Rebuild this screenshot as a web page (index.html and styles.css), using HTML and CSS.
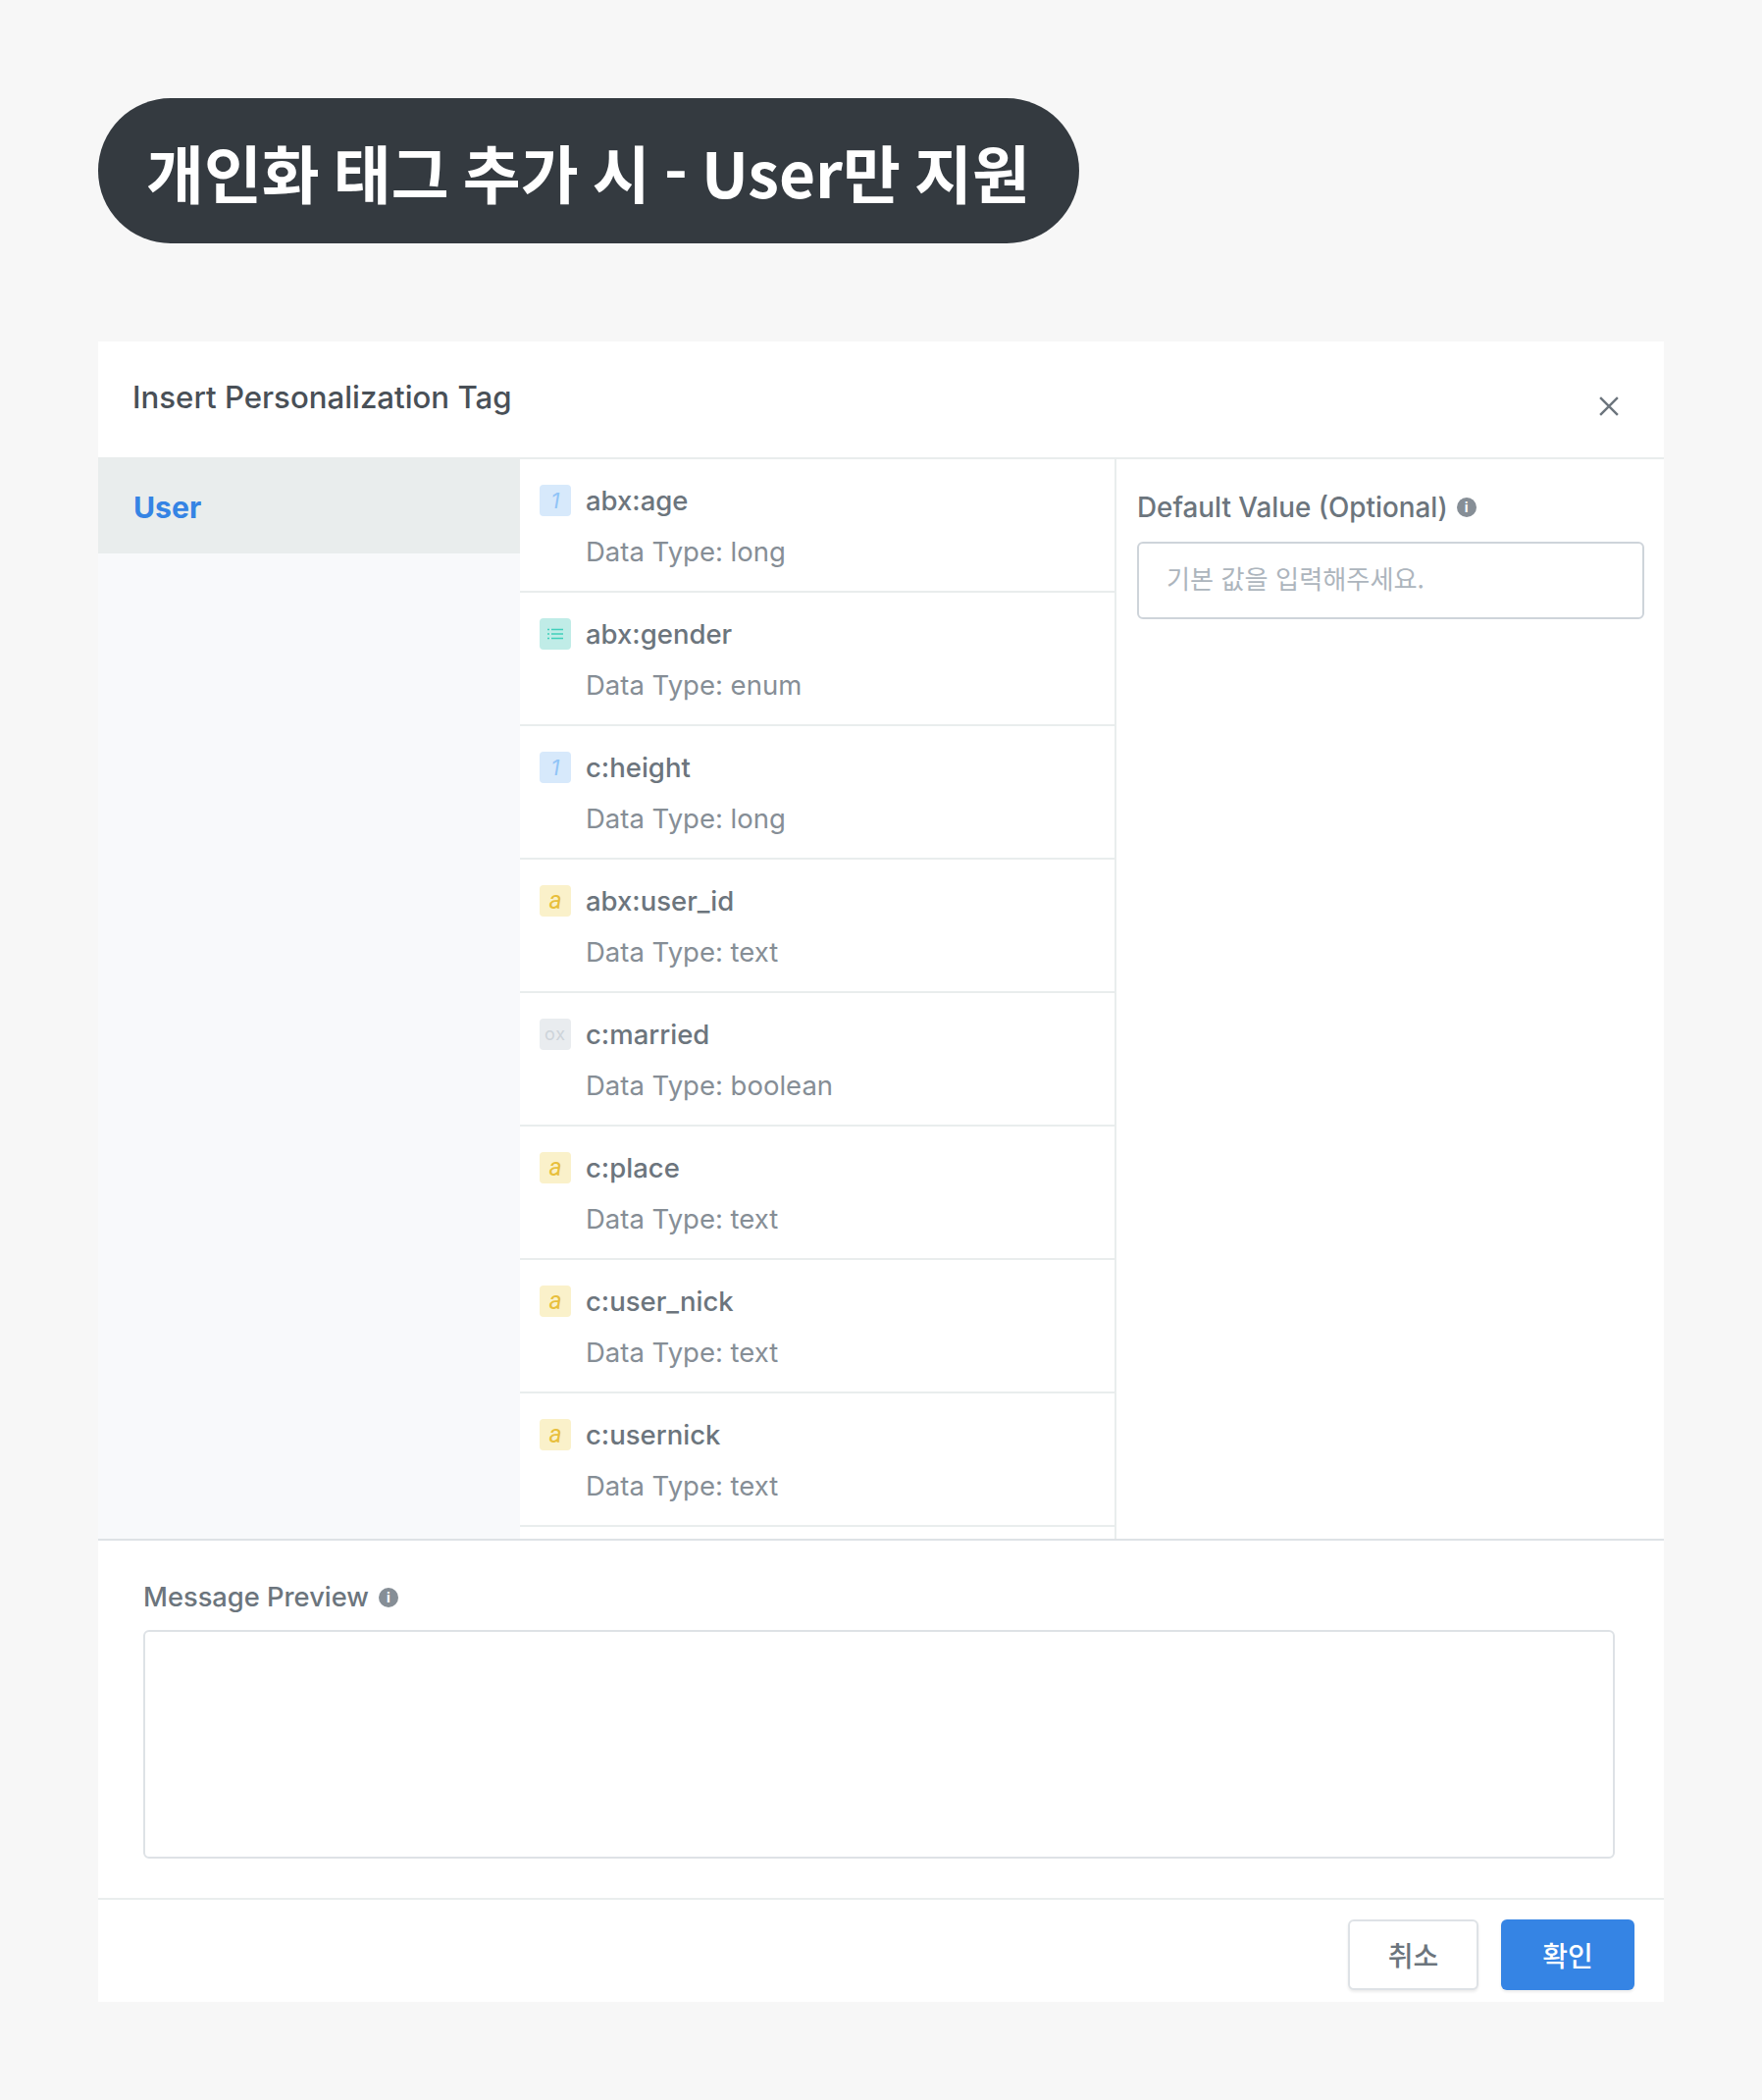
FILE: index.html
```html
<!DOCTYPE html>
<html lang="ko">
<head>
    <meta charset="UTF-8">
    <title>Insert Personalization Tag</title>
    <link rel="stylesheet" href="styles.css">
</head>
<body>
    <div class="page-title">개인화 태그 추가 시 - User만 지원</div>

    <div class="modal">
        <div class="modal-header">
            <h2>Insert Personalization Tag</h2>
            <svg class="close-icon" viewBox="0 0 18 18"><path d="M1 1 17 17M17 1 1 17"/></svg>
        </div>

        <div class="modal-body">
            <div class="sidebar">
                <div class="sidebar-item active">User</div>
            </div>

            <div class="tag-list">
                <div class="tag-row">
                    <span class="badge badge-number">1</span>
                    <div class="tag-text"><div class="tag-name">abx:age</div><div class="tag-type">Data Type: long</div></div>
                </div>
                <div class="tag-row">
                    <span class="badge badge-enum">
                        <svg viewBox="0 0 16 12"><path d="M0 1.5h2M4 1.5h12M0 6h2M4 6h12M0 10.5h2M4 10.5h12"/></svg>
                    </span>
                    <div class="tag-text"><div class="tag-name">abx:gender</div><div class="tag-type">Data Type: enum</div></div>
                </div>
                <div class="tag-row">
                    <span class="badge badge-number">1</span>
                    <div class="tag-text"><div class="tag-name">c:height</div><div class="tag-type">Data Type: long</div></div>
                </div>
                <div class="tag-row">
                    <span class="badge badge-text">a</span>
                    <div class="tag-text"><div class="tag-name">abx:user_id</div><div class="tag-type">Data Type: text</div></div>
                </div>
                <div class="tag-row">
                    <span class="badge badge-bool">ox</span>
                    <div class="tag-text"><div class="tag-name">c:married</div><div class="tag-type">Data Type: boolean</div></div>
                </div>
                <div class="tag-row">
                    <span class="badge badge-text">a</span>
                    <div class="tag-text"><div class="tag-name">c:place</div><div class="tag-type">Data Type: text</div></div>
                </div>
                <div class="tag-row">
                    <span class="badge badge-text">a</span>
                    <div class="tag-text"><div class="tag-name">c:user_nick</div><div class="tag-type">Data Type: text</div></div>
                </div>
                <div class="tag-row">
                    <span class="badge badge-text">a</span>
                    <div class="tag-text"><div class="tag-name">c:usernick</div><div class="tag-type">Data Type: text</div></div>
                </div>
            </div>

            <div class="default-panel">
                <div class="field-label">Default Value (Optional) <span class="info-icon">i</span></div>
                <div class="text-input">기본 값을 입력해주세요.</div>
            </div>
        </div>

        <div class="preview">
            <div class="field-label">Message Preview <span class="info-icon">i</span></div>
            <div class="preview-box"></div>
        </div>

        <div class="modal-footer">
            <button class="btn">취소</button>
            <button class="btn btn-primary">확인</button>
        </div>
    </div>
</body>
</html>
```

FILE: styles.css
```css
* {
    box-sizing: border-box;
    margin: 0;
    padding: 0;
}

body {
    font-family: Inter, "Noto Sans CJK KR", sans-serif;
    background-color: #f7f7f7;
    min-height: 2140px;
    padding: 100px;
    color: #6c757d;
}

.page-title {
    width: 1000px;
    height: 148px;
    border-radius: 74px;
    background-color: #343a40;
    color: #fff;
    font-family: "Noto Sans CJK KR", sans-serif;
    font-size: 64px;
    font-weight: 700;
    word-spacing: -3.7px;
    line-height: 148px;
    padding-left: 49px;
    white-space: nowrap;
    margin-bottom: 100px;
}

.modal {
    width: 1596px;
    height: 1692px;
    background-color: #fff;
    display: flex;
    flex-direction: column;
}

.modal-header {
    height: 120px;
    flex-shrink: 0;
    border-bottom: 2px solid #e9eded;
    display: flex;
    justify-content: space-between;
    padding: 40px 46px 0 35px;
}

.modal-header h2 {
    font-size: 31.2px;
    font-weight: 500;
    line-height: 34px;
    color: #495057;
}

.close-icon {
    width: 20px;
    height: 20px;
    margin-top: 16px;
    fill: none;
    stroke: #6c757d;
    stroke-width: 2.2;
}

.modal-body {
    height: 1100px;
    flex-shrink: 0;
    display: flex;
    overflow: hidden;
}

.sidebar {
    width: 430px;
    flex-shrink: 0;
    background-color: #f8f9fb;
}

.sidebar-item {
    height: 96px;
    line-height: 98px;
    padding-left: 36px;
    font-size: 30.2px;
    font-weight: 700;
}

.sidebar-item.active {
    background-color: #e9eded;
    color: #3584e4;
}

.tag-list {
    width: 608px;
    flex-shrink: 0;
    border-right: 2px solid #e9eded;
}

.tag-row {
    height: 136px;
    border-bottom: 2px solid #e9eded;
    padding: 26px 20px 0;
    display: flex;
    gap: 15px;
}

.badge {
    width: 32px;
    height: 32px;
    border-radius: 4px;
    flex-shrink: 0;
    display: flex;
    align-items: center;
    justify-content: center;
    font-size: 22px;
    line-height: 32px;
}

.badge svg {
    width: 16px;
    height: 12px;
    fill: none;
    stroke: #3fd0bb;
    stroke-width: 1.6;
}

.badge-number {
    background-color: #d7e9fb;
    color: #90c4f7;
    font-style: italic;
}

.badge-enum {
    background-color: #c0ece7;
}

.badge-text {
    background-color: #faf1ca;
    color: #e8bf3c;
    font-family: Roboto, sans-serif;
    font-size: 25px;
    font-style: italic;
}

.badge-bool {
    background-color: #e9ecef;
    color: #ced4da;
    font-size: 18px;
    letter-spacing: 1px;
}

.tag-name {
    font-size: 27.5px;
    font-weight: 500;
    line-height: 32px;
    color: #6c757d;
}

.tag-type {
    font-size: 27.5px;
    line-height: 32px;
    margin-top: 20px;
    color: #868e96;
}

.default-panel {
    flex: 1;
    padding: 33px 20px 0 21px;
}

.field-label {
    font-size: 27.8px;
    font-weight: 500;
    line-height: 32px;
    color: #6c757d;
    display: flex;
    align-items: center;
    gap: 9px;
}

.info-icon {
    width: 20px;
    height: 20px;
    border-radius: 50%;
    background-color: #868e96;
    color: #fff;
    font-size: 14px;
    font-weight: 700;
    line-height: 20px;
    text-align: center;
}

.text-input {
    height: 79px;
    margin-top: 19px;
    border: 2px solid #ced4da;
    border-radius: 6px;
    padding-left: 28px;
    font-family: "Noto Sans CJK KR", sans-serif;
    font-size: 26.2px;
    line-height: 70px;
    color: #adb5bd;
}

.preview {
    height: 368px;
    flex-shrink: 0;
    border-top: 2px solid #dee2e6;
    border-bottom: 2px solid #e9eded;
    padding: 42px 50px 0 46px;
}

.preview .field-label {
    font-size: 27.3px;
    gap: 10px;
}

.preview-box {
    height: 233px;
    margin-top: 17px;
    border: 2px solid #dee2e6;
    border-radius: 6px;
}

.modal-footer {
    flex: 1;
    display: flex;
    justify-content: flex-end;
    gap: 23px;
    padding: 20px 30px 0 0;
}

.btn {
    width: 133px;
    height: 72px;
    border: 2px solid #dee2e6;
    border-radius: 6px;
    background-color: #fff;
    box-shadow: 0 2px 3px rgba(0, 0, 0, 0.08);
    font-family: "Noto Sans CJK KR", sans-serif;
    font-size: 28px;
    font-weight: 500;
    line-height: 64px;
    color: #6c757d;
}

.btn-primary {
    width: 136px;
    border: none;
    background-color: #3584e4;
    color: #fff;
}
```
